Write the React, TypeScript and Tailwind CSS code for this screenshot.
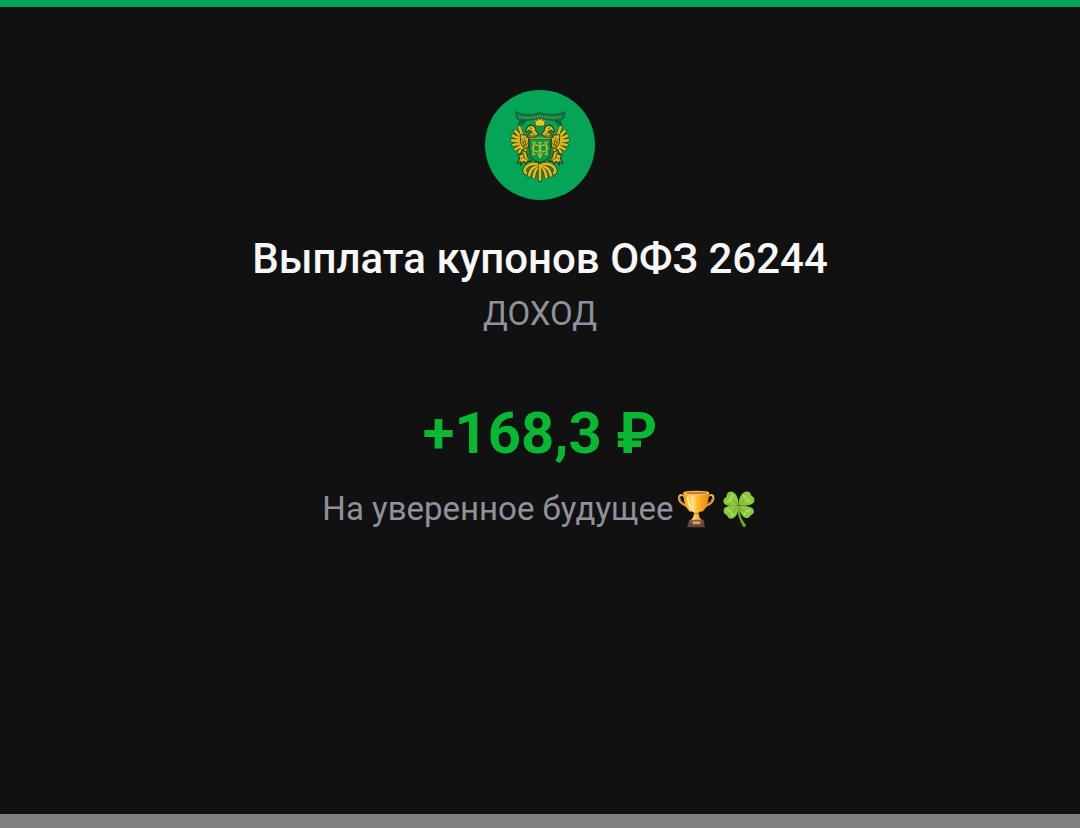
import React from "react";

const GOLD = "#dfb91d";
const DARK = "#284d1d";

const WING_FEATHERS =
  "M129 156 L118 126 M124 158 L106 138 M121 162 L98 152 M124 169 L96 166 M127 174 L100 180 M130 178 L106 193 M135 180 L117 201 M139 182 L134 204";

const TAIL_FEATHERS =
  "M172 238 Q148 232 136 250 Q131 260 138 264 M174 241 Q153 246 147 271 M177 243 Q163 256 161 277 M180 241 L180 284";

function EagleHalf() {
  return (
    <g strokeLinejoin="round" strokeLinecap="round" fill="none">
      {/* wing */}
      <path d={WING_FEATHERS} stroke={DARK} strokeWidth="12" />
      <path d={WING_FEATHERS} stroke={GOLD} strokeWidth="8" />
      <path
        d="M122 149 L158 152 L160 160 L145 163 L145 187 L133 192 L122 174 Z"
        fill={GOLD}
        stroke={DARK}
        strokeWidth="3"
      />
      <path
        d="M125 161 L136 188 M133 157 L139 184 M127 173 L138 169 M130 182 L142 176"
        stroke="#735f13"
        strokeWidth="3"
      />
      {/* head */}
      <path
        d="M137 135 Q143 119 157 121 Q169 125 167 137 L177 148 L162 157 L140 156 L147 148 L155 140 L147 136 L138 142 Z"
        fill={GOLD}
        stroke={DARK}
        strokeWidth="4"
      />
      <path d="M151 129 L155 131 M157 143 L164 149 M145 152 L170 153" stroke="#735f13" strokeWidth="3" />
      {/* leg and claw */}
      <path
        d="M125 195 L139 201 L144 218 L153 229 L144 228 L138 236 L132 229 L121 241 L123 230 L111 235 L119 221 L115 210 L126 207 Z"
        fill={GOLD}
        stroke={DARK}
        strokeWidth="4"
      />
      <path d="M129 202 L134 222 M124 221 L134 212 M137 219 L143 226" stroke="#735f13" strokeWidth="3" />
      {/* tail */}
      <path d={TAIL_FEATHERS} stroke={DARK} strokeWidth="13" />
      <path d={TAIL_FEATHERS} stroke={GOLD} strokeWidth="8" />
      <path d="M170 240 Q151 242 142 258 M172 246 Q157 256 154 272 M177 249 Q170 261 170 277" stroke="#665911" strokeWidth="2" />
    </g>
  );
}

function Crest() {
  return (
    <svg viewBox="15 15 330 330" className="size-full" role="img" aria-label="Министерство финансов">
      {/* ribbon */}
      <path
        d="M105 80 Q141 95 180 83 Q219 95 257 80 L251 100 L241 108 L246 122 L232 119 L223 106 Q202 107 180 98 Q158 107 137 106 L131 118 L115 122 L119 107 L110 100 Z"
        fill="#087c43"
        stroke="#145e35"
        strokeWidth="3"
      />
      <path
        d="M117 95 Q148 103 180 92 Q212 103 243 95"
        fill="none"
        stroke="#7fa743"
        strokeWidth="4"
        strokeDasharray="3 2"
      />
      <path d="M119 112 L134 106 M241 112 L226 106" stroke="#12542d" strokeWidth="5" />
      <EagleHalf />
      <g transform="translate(360 0) scale(-1 1)">
        <EagleHalf />
      </g>
      {/* crown */}
      <path
        d="M164 101 L172 107 L176 97 L180 105 L184 97 L189 107 L196 101 L193 123 L167 123 Z"
        fill="#f0c51f"
        stroke={DARK}
        strokeWidth="2"
      />
      <path d="M171 126 L189 126 L191 137 L180 144 L169 137 Z" fill="#08984d" />
      {/* shield */}
      <path
        d="M147 161 L213 161 L211 207 Q209 227 180 233 Q151 227 149 207 Z"
        fill="#07974d"
        stroke={DARK}
        strokeWidth="4"
      />
      <path d="M149 160 L211 160" stroke="#ccb329" strokeWidth="3" />
      <g fill="none" stroke="#d3b925" strokeWidth="3">
        <path d="M155 171 L167 171 M161 171 L161 207 M155 208 L167 208 M193 171 L205 171 M199 171 L199 207 M193 208 L205 208" />
        <path d="M180 172 L180 219" strokeWidth="4" />
        <path d="M163 173 L173 183 M197 173 L187 183 M174 172 L186 172" />
        <ellipse cx="168" cy="190" rx="12" ry="10" />
        <ellipse cx="192" cy="190" rx="12" ry="10" />
        <path d="M172 202 L180 219 L188 202" />
      </g>
    </svg>
  );
}

function Trophy() {
  return (
    <svg viewBox="21 25 120 120" className="size-10 shrink-0" role="img" aria-label="Кубок">
      <defs>
        <linearGradient id="cup" x1="0" x2="1" y1="0" y2="0">
          <stop offset="0" stopColor="#f29a16" />
          <stop offset=".22" stopColor="#ffc23a" />
          <stop offset=".36" stopColor="#ffe58a" />
          <stop offset=".55" stopColor="#ffb72a" />
          <stop offset="1" stopColor="#ed8610" />
        </linearGradient>
      </defs>
      <path
        d="M48 47 Q31 36 29 51 Q29 65 46 73 Q57 77 63 91 M115 47 Q132 36 134 51 Q134 65 117 73 Q106 77 99 91"
        fill="none"
        stroke="#f3a842"
        strokeWidth="5"
        strokeLinecap="round"
      />
      <path
        d="M46 49 Q33 39 32 51 Q33 62 47 70 M117 49 Q130 39 131 51 Q130 62 116 70"
        fill="none"
        stroke="#ffd88a"
        strokeWidth="2"
      />
      <path
        d="M43 37 Q44 80 62 90 L75 95 Q77 108 65 120 L99 120 Q87 108 89 95 L102 90 Q119 80 120 37 Z"
        fill="url(#cup)"
      />
      <ellipse cx="82" cy="37" rx="39" ry="7" fill="#ffca59" />
      <ellipse cx="82" cy="37" rx="34" ry="4" fill="#c97a2a" />
      <path d="M56 50 Q58 74 69 84" fill="none" stroke="#fff1b0" strokeWidth="5" strokeLinecap="round" />
      <path d="M73 97 Q82 102 91 97" fill="none" stroke="#c97414" strokeWidth="3" />
      <path d="M61 117 L103 117 L105 128 L59 128 Z" fill="#80564a" />
      <path d="M57 127 L106 127 L108 140 L55 140 Z" fill="#694238" />
      <rect x="71" y="122" width="23" height="9" rx="2" fill="#c99a86" />
    </svg>
  );
}

function Clover() {
  return (
    <svg viewBox="144 25 120 120" className="size-10 shrink-0" role="img" aria-label="Клевер">
      <path
        d="M203 75 L208 75 Q209 97 214 111 Q219 121 228 134 Q227 141 220 139 Q210 122 206 108 Q202 94 203 75 Z"
        fill="#6fa52c"
      />
      <g fill="#8bc83e">
        <path d="M206 74 Q176 79 163 70 Q155 55 169 49 Q171 31 187 33 Q206 40 206 74 Z" />
        <path d="M206 74 Q206 41 225 33 Q241 29 244 45 Q259 51 250 67 Q237 78 206 74 Z" />
        <path d="M206 75 Q174 73 163 82 Q156 98 171 104 Q176 119 191 112 Q206 102 206 75 Z" />
        <path d="M207 75 Q239 74 249 84 Q257 98 242 104 Q237 118 222 110 Q208 98 207 75 Z" />
      </g>
      <g fill="none" stroke="#b5dc58" strokeWidth="5" strokeLinecap="round" strokeLinejoin="round">
        <path d="M173 64 Q177 57 184 59 Q182 48 190 44" />
        <path d="M220 45 Q228 48 226 58 Q236 57 240 63" />
        <path d="M172 87 Q177 94 185 91 Q183 99 190 104" />
        <path d="M222 102 Q228 98 226 91 Q235 94 240 87" />
      </g>
      <path
        d="M204 73 L187 56 M208 73 L225 56 M204 77 L187 94 M208 77 L225 94"
        stroke="#68aa2c"
        strokeWidth="3"
        strokeLinecap="round"
      />
    </svg>
  );
}

export default function App() {
  return (
    <div className="flex min-h-screen flex-col bg-[#111111] font-[Roboto,sans-serif]">
      <div className="h-[7px] bg-[#04a757]" />
      <main className="flex flex-1 flex-col items-center px-6 pt-[83px] pb-20 text-center">
        <div className="size-[110px] overflow-hidden rounded-full bg-[#04a556]">
          <Crest />
        </div>
        <h1 className="mt-8 text-[42px] leading-[54px] font-medium text-[#f7f7f7]">
          Выплата купонов ОФЗ 26244
        </h1>
        <p className="mt-[6px] text-[33px] leading-[44px] text-[#90919b]">ДОХОД</p>
        <p className="mt-[61px] text-[58px] leading-[72px] font-bold text-[#08b832]">+168,3 ₽</p>
        <p className="mt-[18px] flex items-center text-[33px] leading-[44px] text-[#90919b]">
          <span>На уверенное будущее</span>
          <span className="ml-0.5 flex gap-0.5">
            <Trophy />
            <Clover />
          </span>
        </p>
      </main>
      <div className="h-[14px] bg-[#808080]" />
    </div>
  );
}
